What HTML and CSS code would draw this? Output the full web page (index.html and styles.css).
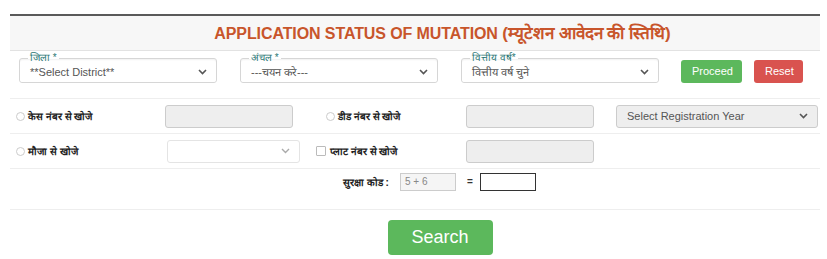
FILE: index.html
```html
<!DOCTYPE html>
<html lang="hi">
<head>
    <meta charset="UTF-8">
    <meta name="viewport" content="width=device-width, initial-scale=1.0">
    <title>Application Status of Mutation</title>
    <link rel="stylesheet" href="styles.css">
</head>
<body>
    <div class="wrap">
        <div class="head">
            <h3 class="title">APPLICATION STATUS OF MUTATION <span class="hi">(म्यूटेशन आवेदन की स्तिथि)</span></h3>
        </div>

        <div class="filters">
            <fieldset class="field">
                <legend>जिला *</legend>
                <div class="select-box">
                    <span>**Select District**</span>
                    <svg class="chev" width="9" height="6" viewBox="0 0 9 6"><path d="M1 1l3.5 3.5L8 1" fill="none" stroke="#555" stroke-width="1.6"/></svg>
                </div>
            </fieldset>
            <fieldset class="field">
                <legend>अंचल *</legend>
                <div class="select-box">
                    <span>---चयन करे---</span>
                    <svg class="chev" width="9" height="6" viewBox="0 0 9 6"><path d="M1 1l3.5 3.5L8 1" fill="none" stroke="#555" stroke-width="1.6"/></svg>
                </div>
            </fieldset>
            <fieldset class="field">
                <legend>वित्तीय वर्ष*</legend>
                <div class="select-box">
                    <span>वित्तीय वर्ष चुने</span>
                    <svg class="chev" width="9" height="6" viewBox="0 0 9 6"><path d="M1 1l3.5 3.5L8 1" fill="none" stroke="#555" stroke-width="1.6"/></svg>
                </div>
            </fieldset>
            <div class="actions">
                <a class="btn btn-green">Proceed</a>
                <a class="btn btn-red">Reset</a>
            </div>
        </div>

        <div class="row">
            <label class="opt opt-1"><span class="radio"></span>केस नंबर से खोजे</label>
            <div class="input grey w128"></div>
            <label class="opt opt-3"><span class="radio"></span>डीड नंबर से खोजे</label>
            <div class="input grey w128"></div>
            <div class="select-box grey reg">
                <span>Select Registration Year</span>
                <svg class="chev" width="9" height="6" viewBox="0 0 9 6"><path d="M1 1l3.5 3.5L8 1" fill="none" stroke="#555" stroke-width="1.6"/></svg>
            </div>
        </div>

        <div class="row">
            <label class="opt opt-1"><span class="radio"></span>मौजा से खोजे</label>
            <div class="select-box faded mauza">
                <span></span>
                <svg class="chev" width="9" height="6" viewBox="0 0 9 6"><path d="M1 1l3.5 3.5L8 1" fill="none" stroke="#aaa" stroke-width="1.4"/></svg>
            </div>
            <label class="opt opt-2"><span class="check"></span>प्लाट नंबर से खोजे</label>
            <div class="input grey w128"></div>
        </div>

        <div class="captcha">
            <span class="cap-label">सुरक्षा कोड :</span>
            <div class="cap-q">5 + 6</div>
            <span class="eq">=</span>
            <div class="cap-a"></div>
        </div>

        <div class="submit">
            <a class="btn btn-green btn-big">Search</a>
        </div>
    </div>
</body>
</html>
```

FILE: styles.css
```css
body, html {
    margin: 0;
    padding: 0;
    background: #fff;
    font-family: "Liberation Sans", Arial, sans-serif;
    color: #333;
}

.wrap {
    margin: 14px 7px 0 10px;
    border-top: 2px solid #5a5a5a;
}

/* Kopfzeile */
.head {
    background: #f7f7f7;
    border-bottom: 1px solid #e2e2e2;
    height: 34px;
    padding-left: 55px;
    text-align: center;
}

.title {
    margin: 0;
    line-height: 35px;
    font-size: 16px;
    font-weight: bold;
    color: #c8552b;
    letter-spacing: -0.1px;
}

.title .hi {
    font-size: 17px;
    letter-spacing: 0;
}

/* Auswahlfelder oben */
.filters {
    display: flex;
    align-items: flex-start;
    padding: 1px 0 0 9px;
    height: 46px;
    border-bottom: 1px solid #eee;
}

.field {
    width: 196px;
    margin: 0 23px 0 0;
    padding: 0;
    border: 1px solid #d6d6d6;
    border-radius: 3px;
    box-shadow: inset 0 1px 2px rgba(0, 0, 0, 0.06);
}

.field legend {
    margin-left: 8px;
    padding: 0 2px;
    font-size: 10px;
    line-height: 12px;
    color: #2b7876;
}

.field .select-box {
    border: none;
    height: 21px;
    margin-top: -3px;
}

.select-box {
    display: flex;
    align-items: center;
    justify-content: space-between;
    box-sizing: border-box;
    height: 23px;
    padding: 0 9px 0 10px;
    border: 1px solid #ccc;
    border-radius: 3px;
    font-size: 11px;
    color: #555;
    background: #fff;
}

.select-box.grey {
    background: #eee;
}

.select-box.faded {
    border-color: #e4e4e4;
}

.reg {
    width: 202px;
    margin-left: 22px;
}

.mauza {
    width: 133px;
    margin-left: 2px;
}

.actions {
    display: flex;
    gap: 12px;
    margin: 8px 0 0 -1px;
}

.btn {
    display: inline-block;
    box-sizing: border-box;
    height: 23px;
    line-height: 23px;
    padding: 0 11px;
    border-radius: 3px;
    color: #fff;
    font-size: 11px;
    text-align: center;
    cursor: pointer;
}

.btn-green {
    background: #5cb85c;
    width: 61px;
}

.btn-red {
    background: #d9534f;
    width: 49px;
}

.btn-big {
    width: 105px;
    height: 35px;
    line-height: 35px;
    font-size: 18px;
    border-radius: 4px;
}

/* Suchzeilen */
.row {
    display: flex;
    align-items: center;
    height: 34px;
    border-bottom: 1px solid #eee;
}

.opt {
    display: flex;
    align-items: center;
    font-size: 10px;
    font-weight: bold;
    color: #222;
    box-sizing: border-box;
}

.opt-1 {
    width: 155px;
    padding-left: 6px;
}

.opt-2 {
    width: 166px;
    padding-left: 16px;
}

.opt-3 {
    width: 173px;
    padding-left: 33px;
}

.radio {
    width: 7px;
    height: 7px;
    border: 1px solid #ccc;
    border-radius: 50%;
    margin-right: 3px;
}

.check {
    width: 8px;
    height: 8px;
    border: 1px solid #bbb;
    border-radius: 1px;
    margin-right: 4px;
}

.input {
    box-sizing: border-box;
    height: 23px;
    border: 1px solid #ccc;
    border-radius: 3px;
}

.input.grey {
    background: #eee;
}

.w128 {
    width: 128px;
}

/* Sicherheitscode */
.captcha {
    display: flex;
    align-items: flex-start;
    padding: 4px 0 0 333px;
    height: 36px;
    border-bottom: 1px solid #eee;
}

.cap-label {
    font-size: 10px;
    font-weight: bold;
    color: #222;
    margin-top: 2px;
    width: 57px;
}

.cap-q {
    box-sizing: border-box;
    width: 56px;
    height: 18px;
    line-height: 16px;
    padding-left: 4px;
    border: 1px solid #ccc;
    background: #f5f5f5;
    font-size: 10px;
    color: #888;
}

.eq {
    font-size: 10px;
    font-weight: bold;
    margin: 3px 7px 0 11px;
}

.cap-a {
    box-sizing: border-box;
    width: 56px;
    height: 18px;
    border: 1px solid #333;
}

.submit {
    text-align: center;
    padding-top: 10px;
    margin-left: 50px;
}
```
